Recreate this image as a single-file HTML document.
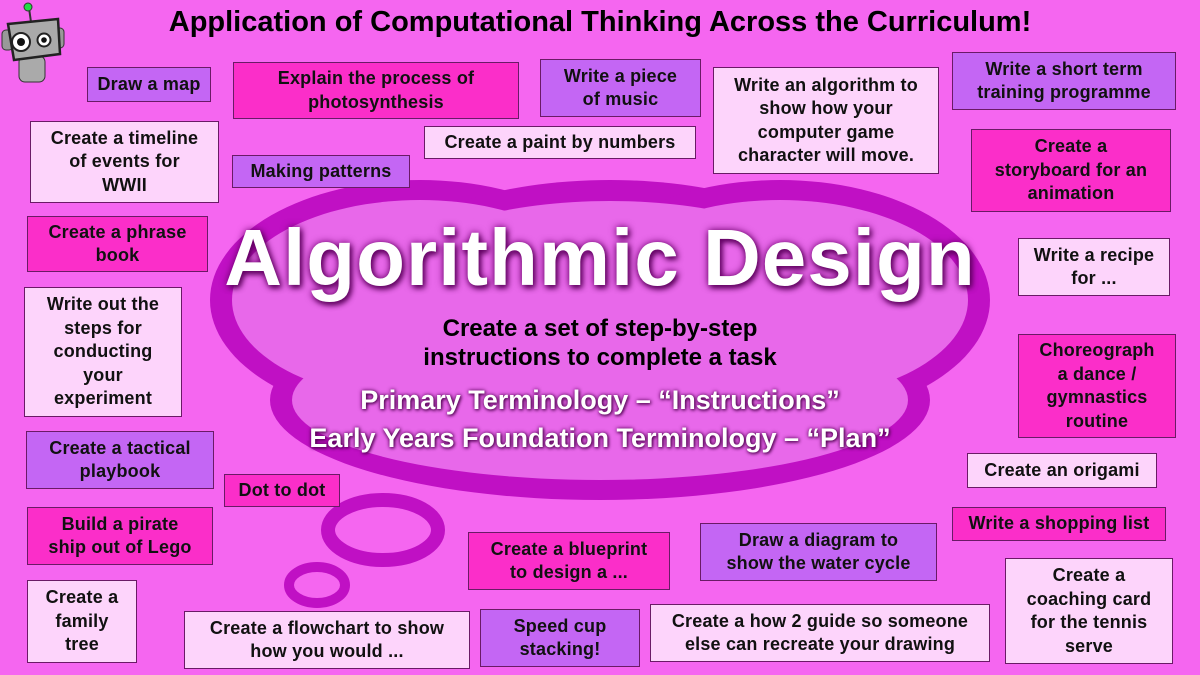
<!DOCTYPE html>
<html><head><meta charset="utf-8"><style>
html,body{margin:0;padding:0}
body{width:1200px;height:675px;overflow:hidden;background:#f566f0;position:relative;font-family:"Liberation Sans",sans-serif;}
.b{position:absolute;box-sizing:border-box;border:1.5px solid #6a1a66;display:flex;align-items:center;justify-content:center;text-align:center;font-weight:bold;font-size:18px;line-height:23.5px;color:#111;letter-spacing:0.2px}
.p{background:#c466f4}.k{background:#fb2ec9}.l{background:#fdd4fb}
.t{position:absolute;left:0;width:1200px;text-align:center;font-weight:bold}
</style></head><body>
<svg width="1200" height="675" style="position:absolute;left:0;top:0">
<g fill="#c010c4">
<ellipse cx="420" cy="300" rx="210" ry="120"/>
<ellipse cx="610" cy="255" rx="210" ry="75"/>
<ellipse cx="390" cy="250" rx="90" ry="50"/>
<ellipse cx="780" cy="300" rx="210" ry="120"/>
<ellipse cx="600" cy="400" rx="330" ry="100"/>
</g>
<g fill="#e868ea">
<ellipse cx="420" cy="300" rx="188" ry="100"/>
<ellipse cx="610" cy="258" rx="190" ry="57"/>
<ellipse cx="390" cy="255" rx="72" ry="35"/>
<ellipse cx="780" cy="300" rx="188" ry="100"/>
<ellipse cx="600" cy="400" rx="308" ry="80"/>
</g>
<ellipse cx="383" cy="530" rx="55" ry="30" fill="none" stroke="#c010c4" stroke-width="14"/>
<ellipse cx="317" cy="585" rx="28" ry="18" fill="none" stroke="#c010c4" stroke-width="10"/>
<line x1="29" y1="8" x2="31" y2="22" stroke="#333" stroke-width="2"/>
<circle cx="28" cy="7" r="4" fill="#22dd44" stroke="#333"/>
<rect x="2" y="30" width="11" height="20" rx="4" fill="#999" stroke="#333"/>
<rect x="53" y="28" width="11" height="20" rx="4" fill="#999" stroke="#333"/>
<rect x="19" y="56" width="26" height="26" rx="6" fill="#aaa" stroke="#333"/>
<path d="M8 24 L58 19 L60 54 L14 60 Z" fill="#aaa" stroke="#222" stroke-width="2.5"/>
<circle cx="21" cy="42" r="9" fill="#fff" stroke="#222" stroke-width="2"/><circle cx="21" cy="42" r="4" fill="#111"/>
<circle cx="44" cy="40" r="6.5" fill="#fff" stroke="#222" stroke-width="2"/><circle cx="44" cy="40" r="2.8" fill="#111"/>
</svg>
<div class="t" style="top:6px;font-size:29px;color:#000;">Application of Computational Thinking Across the Curriculum!</div>
<div class="t" style="top:212px;font-size:80px;color:#fff;letter-spacing:1px;text-shadow:0 0 8px #700070,2px 3px 6px #500050">Algorithmic Design</div>
<div class="t" style="top:314px;font-size:24px;line-height:29px;color:#000;">Create a set of step-by-step<br>instructions to complete a task</div>
<div class="t" style="top:381px;font-size:27px;line-height:38px;color:#fff;text-shadow:0 0 4px #600060,1px 1px 3px #400040">Primary Terminology – “Instructions”<br>Early Years Foundation Terminology – “Plan”</div>

<div class="b p" style="left:87px;top:67px;width:124px;height:35px">Draw a map</div>
<div class="b k" style="left:233px;top:62px;width:286px;height:57px">Explain the process of<br>photosynthesis</div>
<div class="b p" style="left:540px;top:59px;width:161px;height:58px">Write a piece<br>of music</div>
<div class="b l" style="left:713px;top:67px;width:226px;height:107px">Write an algorithm to<br>show how your<br>computer game<br>character will move.</div>
<div class="b p" style="left:952px;top:52px;width:224px;height:58px">Write a short term<br>training programme</div>
<div class="b l" style="left:30px;top:121px;width:189px;height:82px">Create a timeline<br>of events for<br>WWII</div>
<div class="b l" style="left:424px;top:126px;width:272px;height:33px">Create a paint by numbers</div>
<div class="b p" style="left:232px;top:155px;width:178px;height:33px">Making patterns</div>
<div class="b k" style="left:971px;top:129px;width:200px;height:83px">Create a<br>storyboard for an<br>animation</div>
<div class="b k" style="left:27px;top:216px;width:181px;height:56px">Create a phrase<br>book</div>
<div class="b l" style="left:1018px;top:238px;width:152px;height:58px">Write a recipe<br>for ...</div>
<div class="b l" style="left:24px;top:287px;width:158px;height:130px">Write out the<br>steps for<br>conducting<br>your<br>experiment</div>
<div class="b k" style="left:1018px;top:334px;width:158px;height:104px">Choreograph<br>a dance /<br>gymnastics<br>routine</div>
<div class="b p" style="left:26px;top:431px;width:188px;height:58px">Create a tactical<br>playbook</div>
<div class="b l" style="left:967px;top:453px;width:190px;height:35px">Create an origami</div>
<div class="b k" style="left:224px;top:474px;width:116px;height:33px">Dot to dot</div>
<div class="b k" style="left:27px;top:507px;width:186px;height:58px">Build a pirate<br>ship out of Lego</div>
<div class="b k" style="left:952px;top:507px;width:214px;height:34px">Write a shopping list</div>
<div class="b k" style="left:468px;top:532px;width:202px;height:58px">Create a blueprint<br>to design a ...</div>
<div class="b p" style="left:700px;top:523px;width:237px;height:58px">Draw a diagram to<br>show the water cycle</div>
<div class="b l" style="left:1005px;top:558px;width:168px;height:106px">Create a<br>coaching card<br>for the tennis<br>serve</div>
<div class="b l" style="left:27px;top:580px;width:110px;height:83px">Create a<br>family<br>tree</div>
<div class="b l" style="left:184px;top:611px;width:286px;height:58px">Create a flowchart to show<br>how you would ...</div>
<div class="b p" style="left:480px;top:609px;width:160px;height:58px">Speed cup<br>stacking!</div>
<div class="b l" style="left:650px;top:604px;width:340px;height:58px">Create a how 2 guide so someone<br>else can recreate your drawing</div>
</body></html>
